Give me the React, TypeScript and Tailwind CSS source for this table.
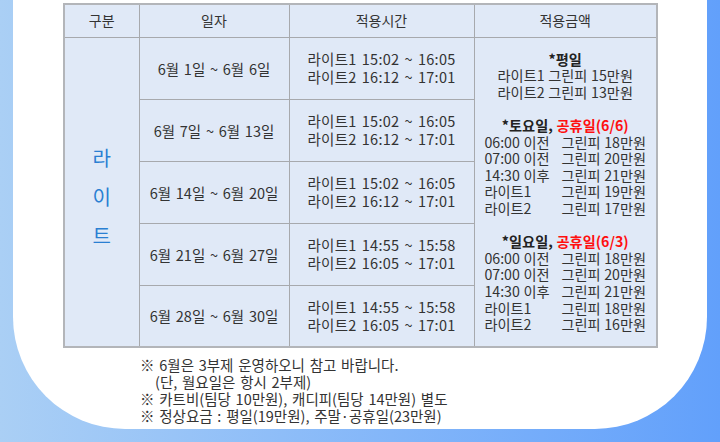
const rows = [
  { date: "6월 1일 ~ 6월 6일", t1: "15:02 ~ 16:05", t2: "16:12 ~ 17:01" },
  { date: "6월 7일 ~ 6월 13일", t1: "15:02 ~ 16:05", t2: "16:12 ~ 17:01" },
  { date: "6월 14일 ~ 6월 20일", t1: "15:02 ~ 16:05", t2: "16:12 ~ 17:01" },
  { date: "6월 21일 ~ 6월 27일", t1: "14:55 ~ 15:58", t2: "16:05 ~ 17:01" },
  { date: "6월 28일 ~ 6월 30일", t1: "14:55 ~ 15:58", t2: "16:05 ~ 17:01" },
];

const saturday = [
  ["06:00 이전", "그린피 18만원"],
  ["07:00 이전", "그린피 20만원"],
  ["14:30 이후", "그린피 21만원"],
  ["라이트1", "그린피 19만원"],
  ["라이트2", "그린피 17만원"],
];

const sunday = [
  ["06:00 이전", "그린피 18만원"],
  ["07:00 이전", "그린피 20만원"],
  ["14:30 이후", "그린피 21만원"],
  ["라이트1", "그린피 18만원"],
  ["라이트2", "그린피 16만원"],
];

function PriceList({ items }: { items: string[][] }) {
  return (
    <div className="grid grid-cols-[77px_auto] text-left">
      {items.map(([a, b]) => (
        <div key={a} className="contents">
          <span>{a}</span>
          <span>{b}</span>
        </div>
      ))}
    </div>
  );
}

export default function App() {
  const cell = "border border-[#a7a9ad] bg-[#e0e9f7] text-center";
  return (
    <div
      className="w-[720px] h-[442px] bg-gradient-to-r from-[#aacff5] to-[#62a0fb] px-[13px] pb-[13px] text-[#333]"
      style={{ fontFamily: '"Noto Sans CJK KR", "Noto Sans", sans-serif' }}
    >
      <div className="h-full bg-white rounded-b-[112px] pt-[3px] pl-[50px]">
        <table className="w-[593px] border-collapse border-2 border-[#b3b5b9] text-[14.5px] leading-[17px] table-fixed [word-spacing:1.5px]">
          <colgroup>
            <col className="w-[75px]" />
            <col className="w-[150px]" />
            <col className="w-[185px]" />
            <col className="w-[183px]" />
          </colgroup>
          <thead>
            <tr className="h-[33px]">
              <th className={`${cell} font-normal text-[14px]`}>구분</th>
              <th className={`${cell} font-normal text-[14px]`}>일자</th>
              <th className={`${cell} font-normal text-[14px]`}>적용시간</th>
              <th className={`${cell} font-normal text-[14px]`}>적용금액</th>
            </tr>
          </thead>
          <tbody>
            {rows.map((r, i) => (
              <tr key={r.date} className="h-[62px]">
                {i === 0 && (
                  <td rowSpan={5} className={cell}>
                    <div className="flex flex-col items-center gap-[18px] pt-[10px] text-[20px] leading-[21px] text-[#2a7fd2]">
                      <span>라</span>
                      <span>이</span>
                      <span>트</span>
                    </div>
                  </td>
                )}
                <td className={cell}>{r.date}</td>
                <td className={`${cell} leading-[18px] tracking-[0.3px]`}>
                  <div>라이트1 {r.t1}</div>
                  <div>라이트2 {r.t2}</div>
                </td>
                {i === 0 && (
                  <td rowSpan={5} className={`${cell} leading-[16.6px] text-[14.2px] [word-spacing:0.5px]`}>
                    <div className="flex flex-col items-center">
                      <div className="font-bold text-[#222]">*평일</div>
                      <div>라이트1 그린피 15만원</div>
                      <div>라이트2 그린피 13만원</div>
                      <div className="h-[16.6px]" />
                      <div>
                        <span className="font-bold text-[#222]">*토요일, </span>
                        <span className="font-bold text-[#ff1010]">공휴일(6/6)</span>
                      </div>
                      <PriceList items={saturday} />
                      <div className="h-[16.6px]" />
                      <div>
                        <span className="font-bold text-[#222]">*일요일, </span>
                        <span className="font-bold text-[#ff1010]">공휴일(6/3)</span>
                      </div>
                      <PriceList items={sunday} />
                    </div>
                  </td>
                )}
              </tr>
            ))}
          </tbody>
        </table>
        <div className="mt-[8px] ml-[77px] text-[14.5px] leading-[17px] [word-spacing:1.5px]">
          <div>※ 6월은 3부제 운영하오니 참고 바랍니다.</div>
          <div className="pl-[15px]">(단, 월요일은 항시 2부제)</div>
          <div>※ 카트비(팀당 10만원), 캐디피(팀당 14만원) 별도</div>
          <div>※ 정상요금 : 평일(19만원), 주말·공휴일(23만원)</div>
        </div>
      </div>
    </div>
  );
}
